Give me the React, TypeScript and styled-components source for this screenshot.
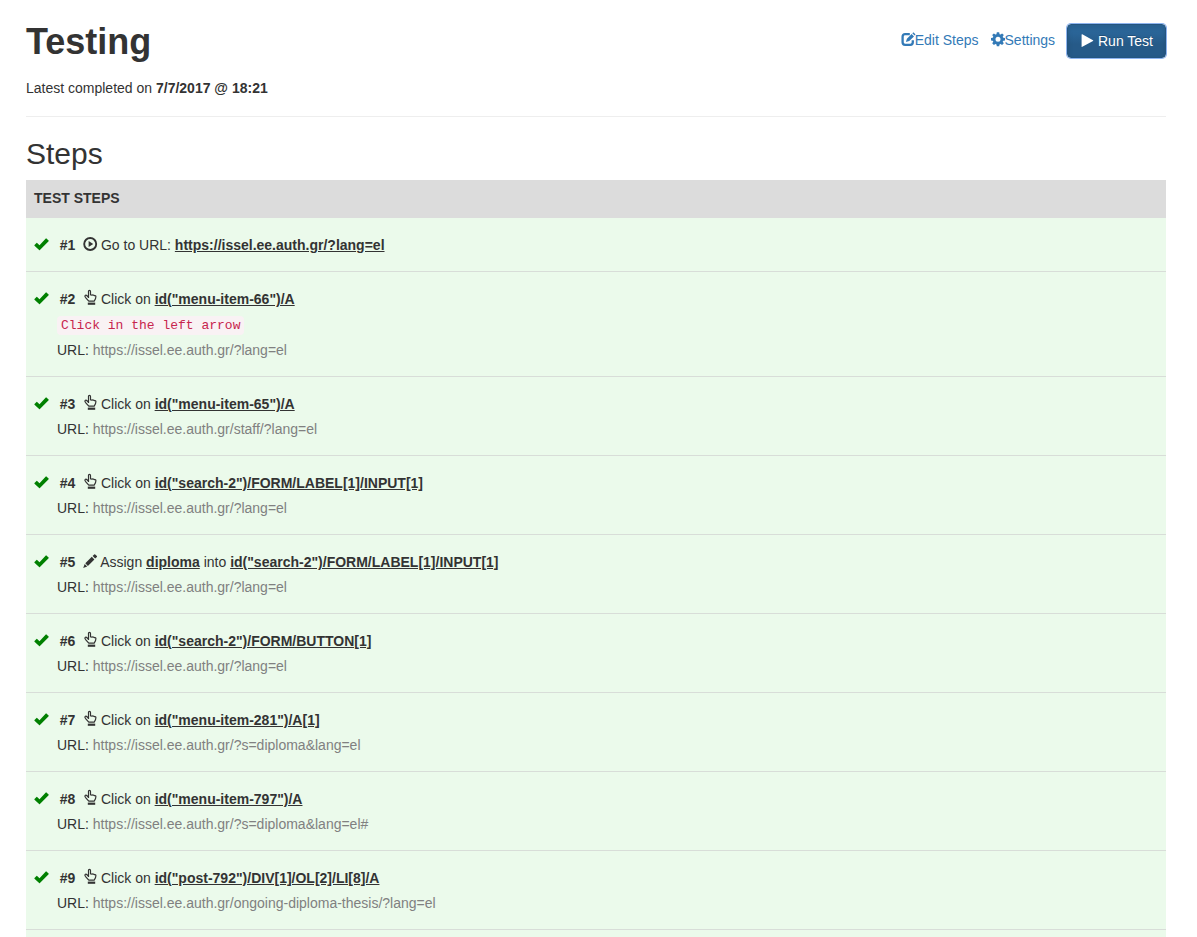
import React from "react";
import styled, { createGlobalStyle } from "styled-components";

const GlobalStyle = createGlobalStyle`
  *, *::before, *::after { box-sizing: border-box; }
  body {
    margin: 0;
    background: #fff;
    color: #333;
    font: 14px/20px "Helvetica Neue", Helvetica, "Liberation Sans", Arial, sans-serif;
  }
`;

const Page = styled.main`
  display: flex;
  flex-direction: column;
  min-height: 100vh;
  padding: 22px 31px 0 26px;
`;

const Header = styled.header`
  display: flex;
  justify-content: space-between;
  align-items: flex-start;
  padding-bottom: 18px;
  border-bottom: 1px solid #eee;
`;

const Title = styled.h1`
  margin: 0 0 16px;
  font-size: 36px;
  line-height: 40px;
  font-weight: 700;
`;

const Completed = styled.p`
  margin: 0;
`;

const Actions = styled.nav`
  display: flex;
  align-items: flex-start;
  gap: 12px;
  padding-top: 2px;
`;

const ActionLink = styled.a`
  padding-top: 6px;
  color: #337ab7;
  text-decoration: none;
  white-space: nowrap;
`;

const RunButton = styled.button`
  height: 34px;
  padding: 6px 12px;
  border: 1px solid #245580;
  border-radius: 4px;
  background: linear-gradient(#2d6ca2, #265a88 60%);
  box-shadow: inset 0 3px 5px rgba(0, 0, 0, 0.125), 0 0 0 1px #8db4f0;
  color: #fff;
  font: inherit;
  text-shadow: 0 -1px 0 rgba(0, 0, 0, 0.2);
  white-space: nowrap;
  cursor: pointer;
`;

const SectionTitle = styled.h2`
  margin: 20px 0 10px;
  font-size: 30px;
  line-height: 33px;
  font-weight: 500;
`;

const StepsPanel = styled.section`
  flex: 1;
  background: #ebfaeb;
`;

const StepsTable = styled.table`
  width: 100%;
  border-collapse: separate;
  border-spacing: 0;
`;

const HeadCell = styled.th`
  padding: 8px 8px 10px;
  background: #dcdcdc;
  text-align: left;
  text-transform: uppercase;
`;

const StepCell = styled.td`
  padding: 17px 8px 16px;
  border-bottom: 1px solid #d8ddd8;
`;

const Detail = styled.div`
  margin: 5px 0 0 23px;
`;

const Note = styled.code`
  display: block;
  width: fit-content;
  margin: 7px 0 0 23px;
  padding: 1px 4px;
  border-radius: 4px;
  background: #f9f2f4;
  color: #c7254e;
  font: 13px/17px "Liberation Mono", monospace;
`;

const Target = styled.strong`
  text-decoration: underline;
`;

const Address = styled.span`
  color: #808080;
`;

const Svg = styled.svg<{ $color?: string }>`
  width: 14px;
  height: 14px;
  vertical-align: -1px;
  overflow: visible;
  color: ${(p) => p.$color ?? "inherit"};
  fill: currentColor;
`;

type IconName = "check" | "play" | "goto" | "click" | "assign" | "edit" | "cog";

const drawings: Record<IconName, React.ReactNode> = {
  check: <path d="M.5 8.1 2.5 6Q2.8 5.7 3.1 6L5.5 8.2 11.8 1.5Q12.1 1.2 12.4 1.5L14.6 3.6Q14.9 3.9 14.6 4.2L5.9 13Q5.5 13.4 5.1 13L.5 8.7Q.2 8.4.5 8.1Z" />,
  play: <path d="M1.6 1.7Q1.6.9 2.3 1.3L13 7.2Q13.6 7.6 13 8L2.3 13.8Q1.6 14.2 1.6 13.4Z" />,
  goto: (
    <>
      <circle cx="7.2" cy="7" r="6" fill="none" stroke="currentColor" strokeWidth="1.9" />
      <path d="M5.6 4.1 10.2 7 5.6 9.9Z" />
    </>
  ),
  click: (
    <>
      <path
        d="M5.5 7V.4Q5.5-.6 6.5-.6T7.5.4V3.8L8.7 4Q9.4 3.5 10 4.2 10.8 3.8 11.4 4.6 12.9 4.4 12.9 5.8 12.9 7.6 11.2 10.2H5.8Q4.6 8.8 2.6 6.6 1.4 5.2 2.2 4.4 3 3.8 4.3 5L5.5 6.4"
        fill="none"
        stroke="currentColor"
        strokeWidth="1.2"
      />
      <path d="M4.8 11.6H12.2V13.8H4.8Z" />
    </>
  ),
  assign: <path d="M.2 14 1.7 10 4.2 12.5ZM2.3 9.3 8.8 2.8 11.4 5.4 4.9 11.9ZM9.6 2 11.2.4Q11.7-.1 12.2.4L13.9 2.1Q14.3 2.6 13.9 3L12.2 4.6Z" />,
  edit: (
    <>
      <path
        d="M8.8 2.2H4.1Q1.6 2.2 1.6 4.7V10.3Q1.6 12.8 4.1 12.8H9.3Q11.8 12.8 11.8 10.3V8.2"
        fill="none"
        stroke="currentColor"
        strokeWidth="2.3"
      />
      <path d="M4.9 10 5.9 6.7 10.6 2 13 4.4 8.2 9ZM11.3 1.3 12.2.4Q12.4.2 12.6.4L14.4 2.2Q14.6 2.4 14.4 2.6L13.6 3.6Z" />
    </>
  ),
  cog: (
    <>
      <circle cx="7" cy="7.2" r="3.9" fill="none" stroke="currentColor" strokeWidth="2.8" />
      {[0, 45, 90, 135, 180, 225, 270, 315].map((angle) => (
        <path key={angle} d="M5.3 2.7 5.8 0H8.2L8.7 2.7Z" transform={`translate(0 .2) rotate(${angle} 7 7)`} />
      ))}
    </>
  ),
};

function Icon({ name, color }: { name: IconName; color?: string }) {
  return (
    <Svg viewBox="0 0 14 14" $color={color} aria-hidden="true">
      {drawings[name]}
    </Svg>
  );
}

interface Step {
  kind: "goto" | "click" | "assign";
  target: string;
  value?: string;
  note?: string;
  url?: string;
}

const site = "https://issel.ee.auth.gr/";

const steps: Step[] = [
  { kind: "goto", target: `${site}?lang=el` },
  { kind: "click", target: 'id("menu-item-66")/A', note: "Click in the left arrow", url: `${site}?lang=el` },
  { kind: "click", target: 'id("menu-item-65")/A', url: `${site}staff/?lang=el` },
  { kind: "click", target: 'id("search-2")/FORM/LABEL[1]/INPUT[1]', url: `${site}?lang=el` },
  { kind: "assign", value: "diploma", target: 'id("search-2")/FORM/LABEL[1]/INPUT[1]', url: `${site}?lang=el` },
  { kind: "click", target: 'id("search-2")/FORM/BUTTON[1]', url: `${site}?lang=el` },
  { kind: "click", target: 'id("menu-item-281")/A[1]', url: `${site}?s=diploma&lang=el` },
  { kind: "click", target: 'id("menu-item-797")/A', url: `${site}?s=diploma&lang=el#` },
  { kind: "click", target: 'id("post-792")/DIV[1]/OL[2]/LI[8]/A', url: `${site}ongoing-diploma-thesis/?lang=el` },
];

function Action({ step }: { step: Step }) {
  if (step.kind === "assign") {
    return (
      <>
        Assign <Target>{step.value}</Target> into <Target>{step.target}</Target>
      </>
    );
  }
  return (
    <>
      {step.kind === "goto" ? "Go to URL:" : "Click on"} <Target>{step.target}</Target>
    </>
  );
}

function StepRow({ step, number }: { step: Step; number: number }) {
  return (
    <tr>
      <StepCell>
        <div>
          <Icon name="check" color="#008000" />
          {"\u00a0\u00a0 "}
          <strong>#{number}</strong>
          {"\u00a0 "}
          <Icon name={step.kind} /> <Action step={step} />
        </div>
        {step.note && <Note>{step.note}</Note>}
        {step.url && (
          <Detail>
            URL: <Address>{step.url}</Address>
          </Detail>
        )}
      </StepCell>
    </tr>
  );
}

export default function App() {
  return (
    <>
      <GlobalStyle />
      <Page>
        <Header>
          <div>
            <Title>Testing</Title>
            <Completed>
              Latest completed on <strong>7/7/2017 @ 18:21</strong>
            </Completed>
          </div>
          <Actions>
            <ActionLink href="#edit">
              <Icon name="edit" />
              Edit Steps
            </ActionLink>
            <ActionLink href="#settings">
              <Icon name="cog" />
              Settings
            </ActionLink>
            <RunButton type="button">
              <Icon name="play" /> Run Test
            </RunButton>
          </Actions>
        </Header>
        <SectionTitle>Steps</SectionTitle>
        <StepsPanel>
          <StepsTable>
            <thead>
              <tr>
                <HeadCell scope="col">Test Steps</HeadCell>
              </tr>
            </thead>
            <tbody>
              {steps.map((step, index) => (
                <StepRow key={index} step={step} number={index + 1} />
              ))}
            </tbody>
          </StepsTable>
        </StepsPanel>
      </Page>
    </>
  );
}
